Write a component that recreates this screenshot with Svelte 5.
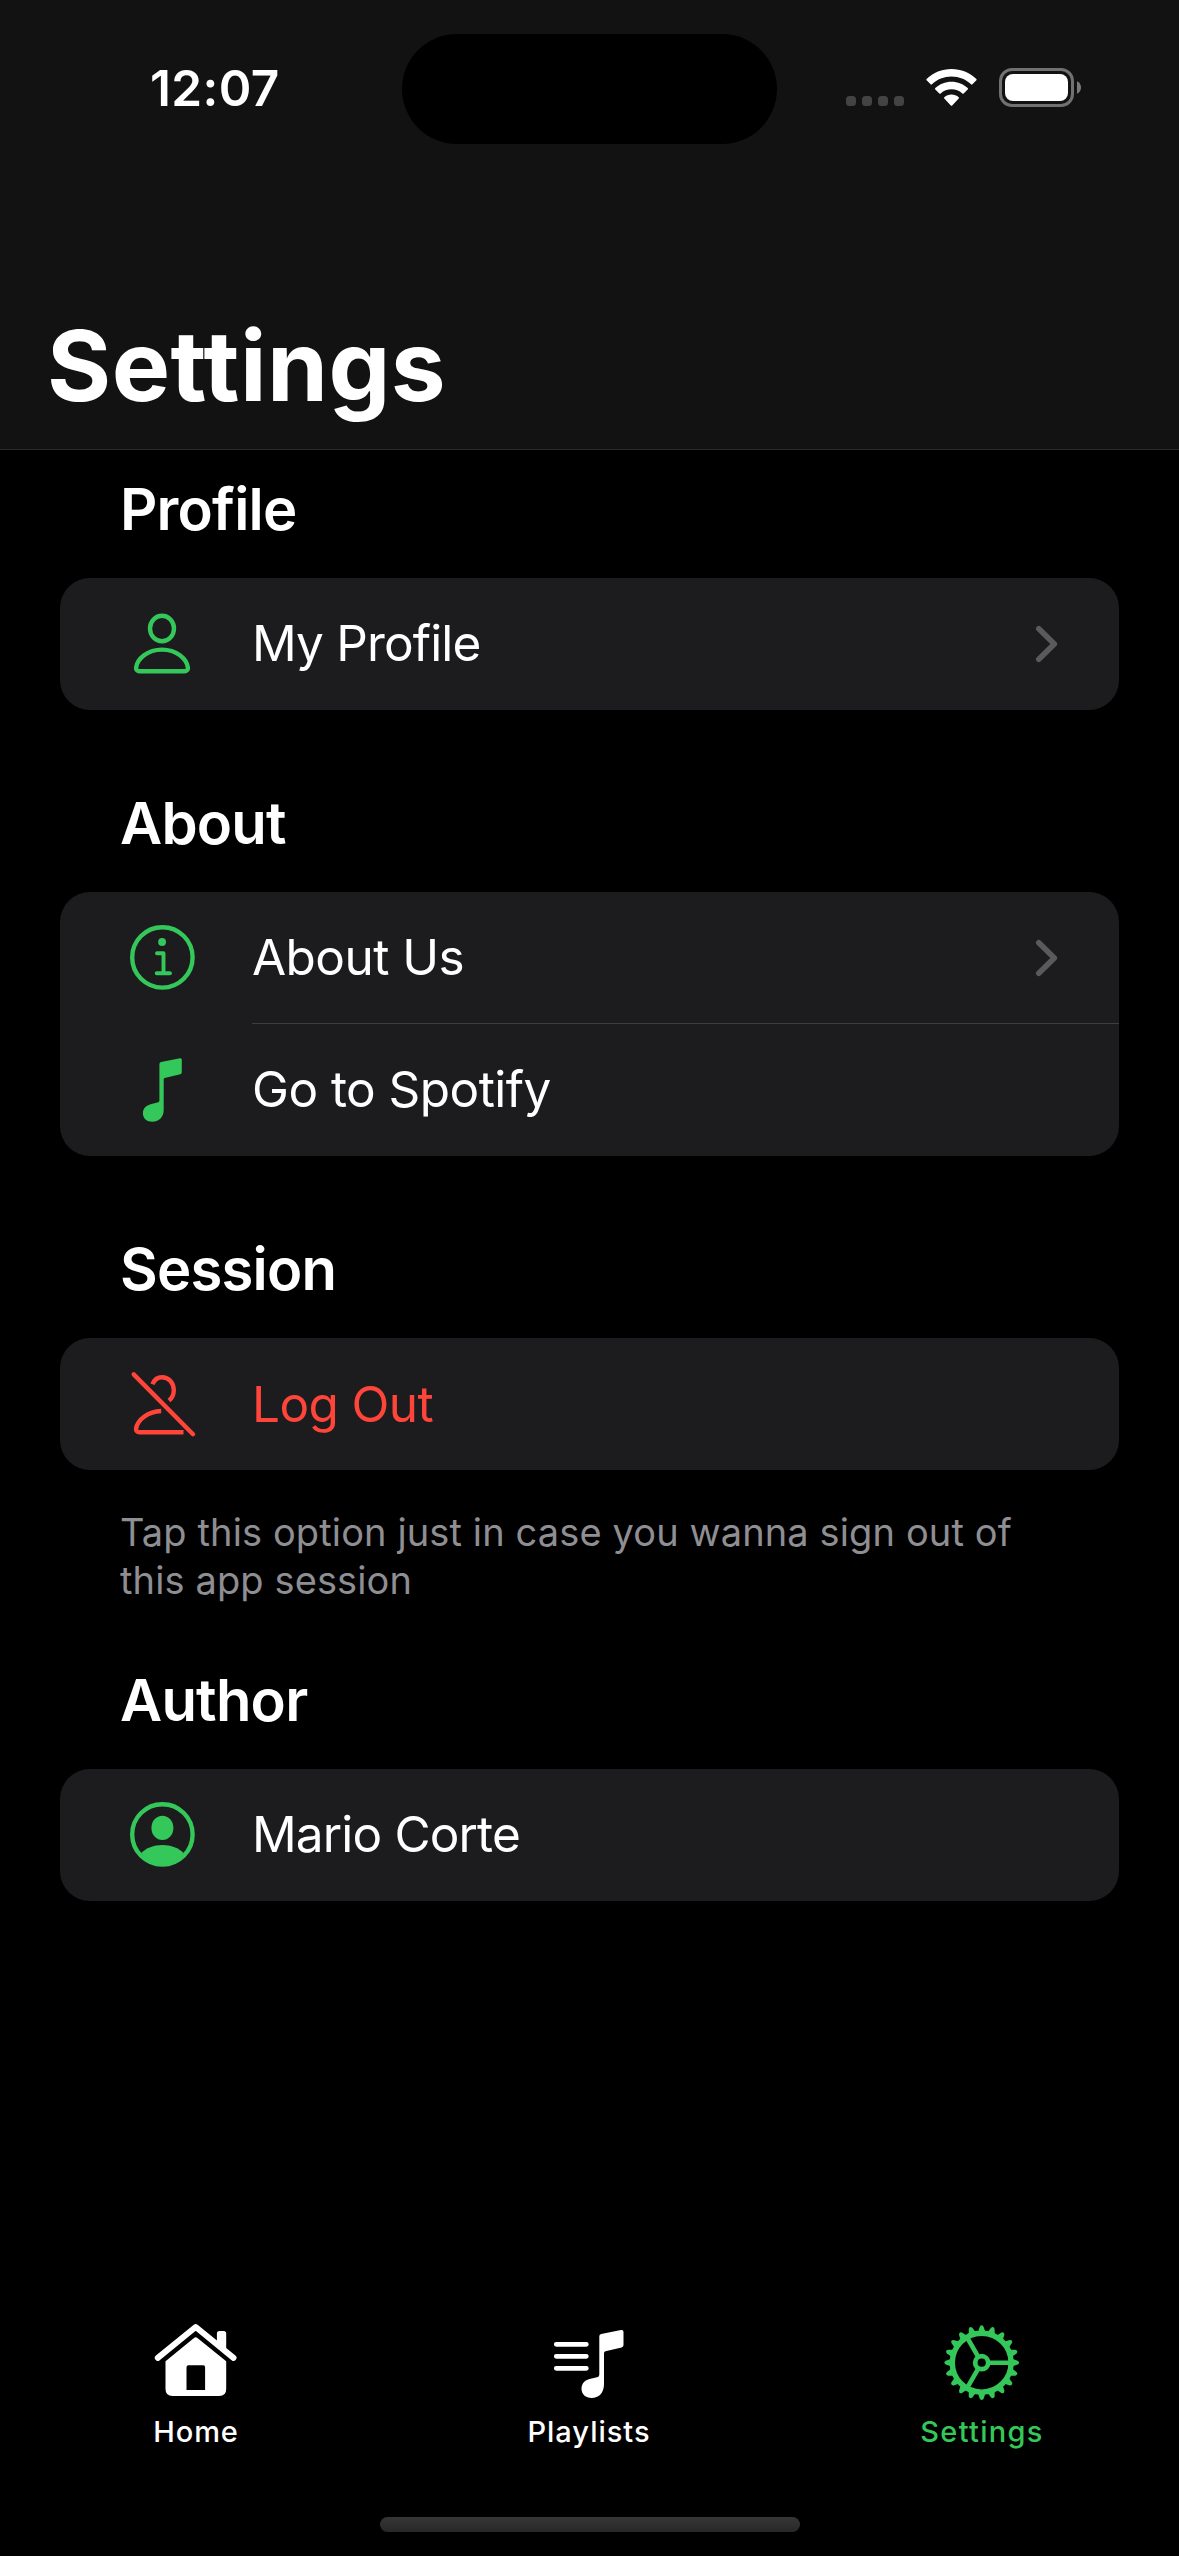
<script>
  const sections = [
    { title: 'Profile', rows: [{ icon: 'person', label: 'My Profile', cls: 't-profile', link: true }] },
    {
      title: 'About',
      rows: [
        { icon: 'info', label: 'About Us', cls: 't-about', link: true },
        { icon: 'note', label: 'Go to Spotify', cls: 't-spotify' }
      ]
    },
    {
      title: 'Session',
      rows: [{ icon: 'slash', label: 'Log Out', cls: 't-logout', danger: true }],
      note: 'Tap this option just in case you wanna sign out of this app session'
    },
    { title: 'Author', rows: [{ icon: 'account', label: 'Mario Corte', cls: 't-author' }] }
  ];

  const teeth = Array.from({ length: 20 }, (_, i) => i * 18);
</script>

<div class="screen">
  <header>
    <div class="status">
      <div class="side"><span class="time">12:07</span></div>
      <div class="island"></div>
      <div class="side indicators">
        <svg width="240" height="44" viewBox="0 0 240 44">
          <g fill="#434343">
            <rect x="2" y="28" width="10" height="10" rx="3.5" />
            <rect x="18" y="28" width="10" height="10" rx="3.5" />
            <rect x="34" y="28" width="10" height="10" rx="3.5" />
            <rect x="50" y="28" width="10" height="10" rx="3.5" />
          </g>
          <g fill="#fff">
            <path d="M82.6 12.2a1 1 0 0 1 0-1.3C89.3 4.5 98 1 107.500 1s18.200 3.500 24.900 9.900a1 1 0 0 1 0 1.300l-4 4.100a1 1 0 0 1-1.400 0C121.800 11.400 115 8.600 107.500 8.600s-14.300 2.800-19.500 7.700a1 1 0 0 1-1.400 0Z" />
            <path d="M91.300 21.400a1 1 0 0 1 0-1.400C95.600 16 101.300 13.700 107.500 13.700s11.900 2.300 16.200 6.300a1 1 0 0 1 0 1.400l-4 4a1 1 0 0 1-1.400 0C115.400 22.800 111.600 21.300 107.500 21.300s-7.900 1.500-10.800 4.100a1 1 0 0 1-1.400 0Z" />
            <path d="M100.300 30.600a1 1 0 0 1 0-1.400C102.300 27.400 104.800 26.400 107.500 26.400s5.200 1 7.200 2.800a1 1 0 0 1 0 1.400l-6.500 6.900a1 1 0 0 1-1.400 0Z" />
          </g>
          <rect x="156.500" y="1.500" width="72" height="36" rx="11.500" fill="none" stroke="#717171" stroke-width="3" />
          <rect x="161" y="6" width="63" height="27" rx="8" fill="#fff" />
          <path d="M233 13.200c2.500 1 4 3.500 4 6.300s-1.500 5.300-4 6.300z" fill="#7a7a7a" />
        </svg>
      </div>
    </div>
    <h1>Settings</h1>
  </header>

  <main>
    {#each sections as s}
      <section class:has-note={s.note}>
        <h2>{s.title}</h2>
        <div class="card">
          {#each s.rows as row, i}
            <div class="row" class:danger={row.danger}>
              <svg class="icon" width="84" height="84" viewBox="0 0 84 84" fill="none" stroke="currentColor" stroke-width="4.400" stroke-linecap="round" stroke-linejoin="round">
                {#if row.icon === 'person'}
                  <ellipse cx="42" cy="26.500" rx="12" ry="12.700" />
                  <path d="M19.500 69.200c-2.200 0-3.600-1.300-3.400-3.600C17.300 56.500 27.500 47.600 42 47.600s24.700 8.900 25.900 18c.2 2.300-1.200 3.600-3.400 3.600Z" />
                {:else if row.icon === 'info'}
                  <circle cx="42.400" cy="41.400" r="30.200" />
                  <circle cx="42.100" cy="26" r="3.900" fill="currentColor" stroke="none" />
                  <path d="M37 37.300h6.500v19.500M36.700 57.300h13.300" stroke-width="3.900" />
                {:else if row.icon === 'note'}
                  <path d="M41 14L60 10.300q1.800-.3 1.800 1.500V24.300q0 1.500-1.500 1.900L44.700 30q-1 .3-1 1.300V62C43.700 69.500 38.500 73.700 32.300 73.700c-5.500 0-9.400-3.500-9.400-8.500 0-5.200 3.900-8.300 8.700-9.300l5.800-1.300c1.500-.3 2-1 2-2.500V16q0-1.700 1.600-2Z" fill="currentColor" stroke="none" />
                {:else if row.icon === 'slash'}
                  <path d="M13.700 12.400L73 72.200" />
                  <g stroke-linecap="butt">
                    <path d="M32.500 22.200C34.200 17.700 38 15.200 42.100 15.200c6.700 0 11.700 5.800 11.700 13 0 4.600-1.900 8.100-4.900 10.400" />
                    <path d="M41.200 49C28 49.300 17.200 58 16.100 66.500c-.3 2.300 1.200 3.700 3.400 3.700H63.500" />
                  </g>
                {:else}
                  <circle cx="42.400" cy="41.400" r="30.200" />
                  <ellipse cx="42.400" cy="34.900" rx="11" ry="12.100" fill="currentColor" stroke="none" />
                  <path d="M21.300 60C26 55 33.600 52 42.400 52S58.800 55 63.500 60C58 68 50.500 71.700 42.400 71.700S26.600 68 21.300 60Z" fill="currentColor" stroke="none" />
                {/if}
              </svg>
              <div class="body" class:divided={i < s.rows.length - 1}>
                <span class="label {row.cls}">{row.label}</span>
                {#if row.link}
                  <svg width="24" height="40" viewBox="0 0 24 40" fill="none" stroke="#5a5a5d" stroke-width="5.600" stroke-linecap="round" stroke-linejoin="round">
                    <path d="M3.800 4.800L19.300 20L3.800 35.200" />
                  </svg>
                {/if}
              </div>
            </div>
          {/each}
        </div>
        {#if s.note}<p>{s.note}</p>{/if}
      </section>
    {/each}
  </main>

  <nav>
    <div class="tab">
      <svg width="100" height="90" viewBox="0 0 100 90">
        <path d="M11.800 43.800L49.700 13L87.500 43.800" fill="none" stroke="#fff" stroke-width="6" stroke-linecap="round" stroke-linejoin="round" />
        <path d="M70.900 30V19.500Q70.900 17 73.400 17H77.700Q80.200 17 80.200 19.500V38Z" fill="#fff" />
        <path fill="#fff" fill-rule="evenodd" d="M48 24Q49.700 22.600 51.400 24L80.200 47.300V75Q80.200 82 73.200 82H26.500Q19.500 82 19.500 75V47.300ZM42.500 51.300Q40.500 51.300 40.500 53.300V76H59.100V53.300Q59.100 51.300 57.100 51.300Z" />
      </svg>
      <span class="n-home">Home</span>
    </div>
    <div class="tab">
      <svg width="100" height="90" viewBox="0 0 100 90">
        <path d="M17.300 30.300H47.300M17.300 42.300H47.300M17.300 54.300H47.300" stroke="#fff" stroke-width="4.800" stroke-linecap="round" />
        <path d="M62.200 20L82 16q2.500-.5 2.500 2V31q0 1.900-1.900 2.400L66.500 37.200q-1.500.4-1.500 1.900V70C65 79 59.800 84 52.500 84 46.700 84 42.500 80.200 42.500 74.800 42.500 69 46.500 65.700 51.500 64.700l6.500-1.400q2.300-.5 2.300-2.600V22.200q0-1.800 1.900-2.200Z" fill="#fff" />
      </svg>
      <span class="n-lists">Playlists</span>
    </div>
    <div class="tab active">
      <svg width="100" height="90" viewBox="0 0 100 90">
        <g transform="translate(49.700 48.700)" fill="none" stroke="currentColor">
          <circle r="29.400" stroke-width="5.400" />
          <circle r="6.500" stroke-width="4.800" />
          <path d="M8 0H28M-4 -6.900L-14 -24.200M-4 6.900L-14 24.200" stroke-width="4.600" />
          {#each teeth as a}
            <path transform="rotate({a})" d="M31 -3.600L36 -1.900Q38.800 0 36 1.900L31 3.600Z" fill="currentColor" stroke="none" />
          {/each}
        </g>
      </svg>
      <span class="n-set">Settings</span>
    </div>
  </nav>
  <div class="home-bar"></div>
</div>

<style>
  :global(body) { background: #000; }
  * { box-sizing: border-box; }
  .screen {
    width: 1179px;
    height: 2556px;
    display: flex;
    flex-direction: column;
    background: #000;
    color: #fff;
    font-family: Inter, 'Liberation Sans', sans-serif;
    overflow: hidden;
  }
  header {
    height: 450px;
    flex: none;
    background: #121212;
    border-bottom: 1px solid #2a2a2b;
  }
  .status {
    display: flex;
    padding-top: 34px;
    height: 144px;
  }
  .side { flex: 0 0 402px; }
  .island {
    flex: none;
    width: 375px;
    height: 110px;
    border-radius: 55px;
    background: #000;
  }
  .time {
    display: block;
    padding: 24px 0 0 150px;
    font-size: 49.500px;
    line-height: 60px;
    font-weight: 600;
    letter-spacing: 0.400px;
  }
  .indicators { padding: 34px 0 0 67px; }
  svg { display: block; flex: none; }
  h1 {
    margin: 162px 0 0 47px;
    font-size: 98px;
    line-height: 120px;
    font-weight: 700;
    letter-spacing: 0.500px;
  }
  main {
    flex: 1;
    padding: 28px 60px 0;
  }
  section { padding-bottom: 82px; }
  .has-note { padding-bottom: 65px; }
  h2 {
    margin: 0;
    padding-left: 60px;
    font-size: 58px;
    line-height: 62px;
    height: 100px;
    font-weight: 600;
    letter-spacing: -0.800px;
  }
  .card {
    background: #1c1c1e;
    border-radius: 30px;
    overflow: hidden;
  }
  .row {
    display: flex;
    align-items: center;
    height: 132px;
    color: #34c759;
  }
  .icon { margin: 0 48px 0 60px; }
  .body {
    flex: 1;
    height: 132px;
    display: flex;
    align-items: center;
    justify-content: space-between;
    padding-right: 60px;
    color: #fff;
  }
  .divided { border-bottom: 1px solid #3d3d40; }
  .danger, .danger .body { color: #ff453a; }
  .label {
    font-size: 49.500px;
    line-height: 60px;
    padding-bottom: 2px;
    white-space: nowrap;
  }
  .t-profile { letter-spacing: -0.850px; }
  .t-about { letter-spacing: -0.550px; }
  .t-spotify { letter-spacing: -0.550px; }
  .t-logout { letter-spacing: -0.600px; padding-bottom: 0; }
  .t-author { letter-spacing: -0.850px; }
  p {
    margin: 0;
    padding: 38px 60px 0;
    font-size: 38px;
    line-height: 48px;
    color: #8e8e93;
    letter-spacing: 0.120px;
  }
  nav {
    height: 144px;
    margin-bottom: 59px;
    flex: none;
    display: flex;
  }
  .tab {
    flex: 1;
    display: flex;
    flex-direction: column;
    align-items: center;
    padding-right: 1px;
    font-size: 29px;
    line-height: 36px;
    font-weight: 500;
  }
  .tab svg { margin-bottom: 10px; }
  .n-home { letter-spacing: 0.900px; }
  .n-lists { letter-spacing: 1px; }
  .n-set { letter-spacing: 1.300px; }
  .active { color: #34c759; }
  .home-bar {
    width: 420px;
    height: 15px;
    border-radius: 8px;
    background: linear-gradient(#363636, #282828);
    margin: 0 auto 24px;
    flex: none;
  }
</style>
